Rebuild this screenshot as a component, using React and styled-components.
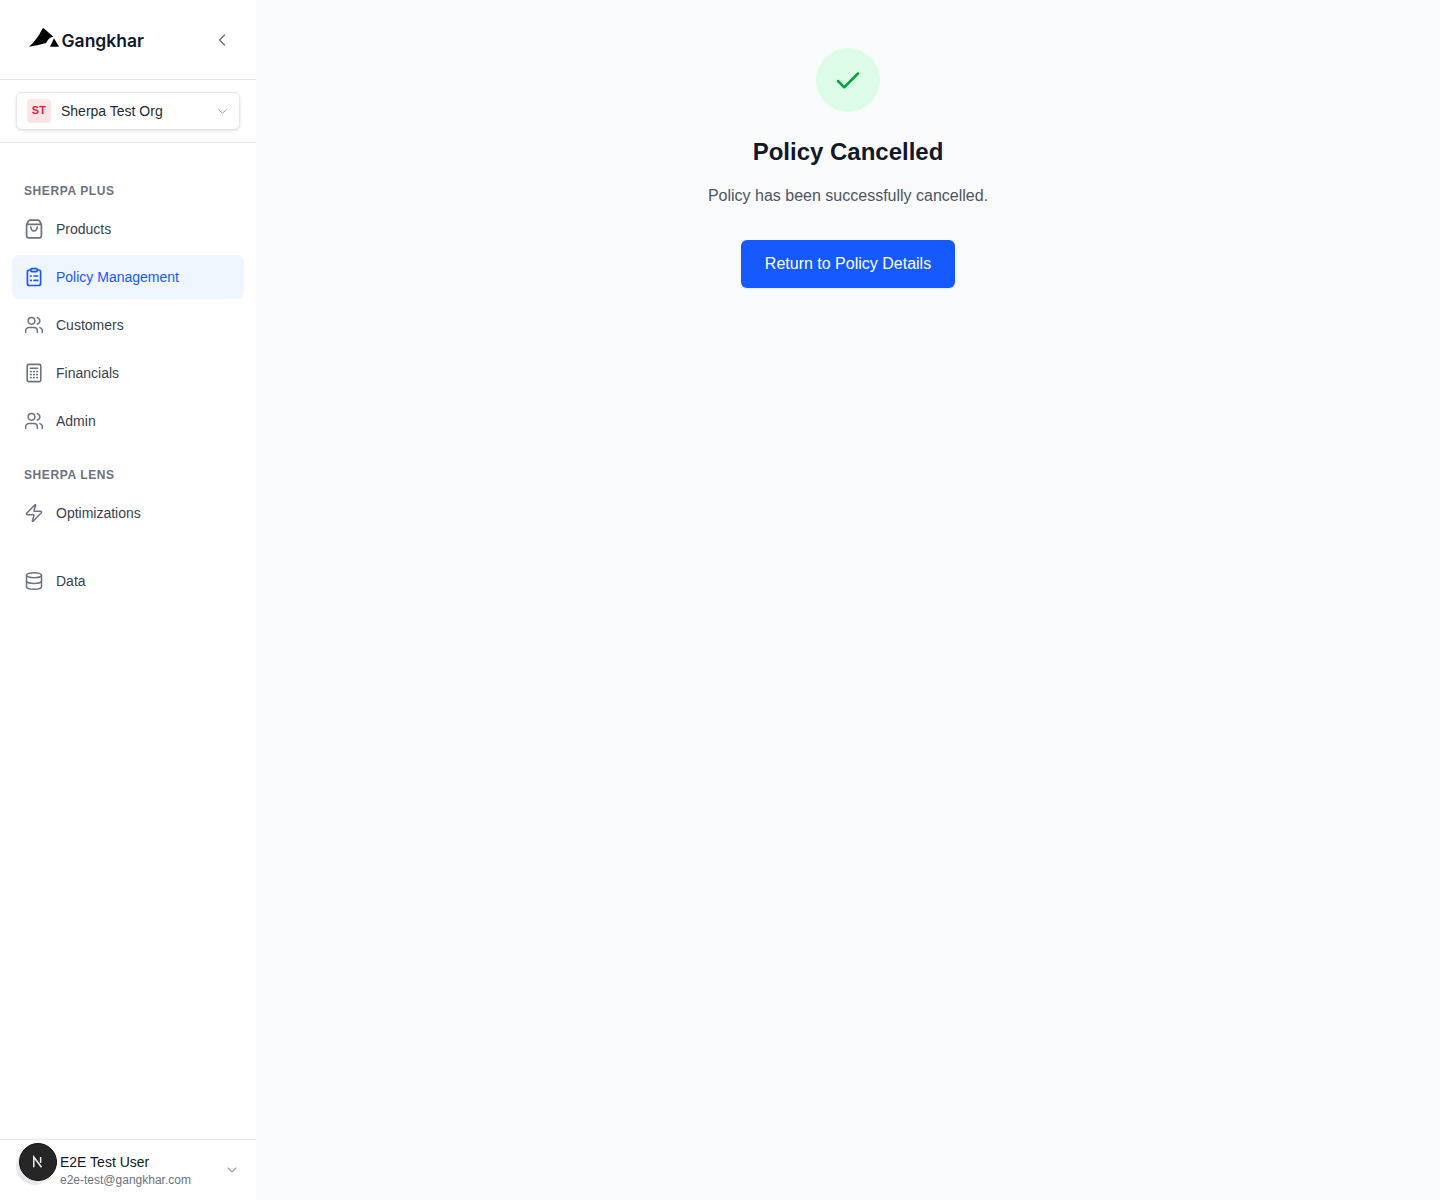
import styled, { createGlobalStyle } from "styled-components"
import { Check, ChevronDown, ChevronLeft, Database, Users, Zap } from "lucide-react"

const GlobalStyle = createGlobalStyle`
    html, body {
        margin: 0;
        padding: 0;
        background: #f9fafb;
        font-family: "Liberation Sans", Arial, sans-serif;
    }
    * {
        box-sizing: border-box;
    }
`

const BagIcon = () => (
    <svg width="20" height="20" viewBox="0 0 20 20" fill="none" stroke="currentColor" strokeWidth="1.7" strokeLinecap="round" strokeLinejoin="round">
        <path d="M4.2 2.4 Q4.6 1.2 6 1.2 H14 Q15.4 1.2 15.8 2.4 L17 5 Q17.4 5.8 17.4 6.5 V16.4 Q17.4 18.8 15 18.8 H5 Q2.6 18.8 2.6 16.4 V6.5 Q2.6 5.8 3 5 Z" />
        <path d="M3 5.4 H17" />
        <path d="M6.8 8 Q7.2 12 10 12 Q12.8 12 13.2 8" />
    </svg>
)

const ClipboardIcon = () => (
    <svg width="20" height="20" viewBox="0 0 20 20" fill="none" stroke="currentColor" strokeWidth="1.7" strokeLinecap="round" strokeLinejoin="round">
        <rect x="3.4" y="3" width="13.2" height="15.5" rx="2" />
        <rect x="6.8" y="1.6" width="6.4" height="3" rx="1" fill="#eff6ff" />
        <path d="M6.6 9 H7.2 M10 9 H13.600 M6.6 13.4 H7.2 M10 13.4 H13.600" />
    </svg>
)

const CalculatorIcon = () => (
    <svg width="20" height="20" viewBox="0 0 20 20" fill="none" stroke="currentColor" strokeWidth="1.6" strokeLinecap="round" strokeLinejoin="round">
        <rect x="3.2" y="1.4" width="13.6" height="17.2" rx="1.6" />
        <path d="M6.4 5.2 H13.6" />
        <path d="M6.6 8.6 H7.2 M9.7 8.6 H10.3 M12.8 8.6 H13.4 M6.6 11.6 H7.2 M9.7 11.6 H10.3 M12.8 11.6 H13.4 M6.6 14.6 H7.2 M9.7 14.6 H10.3 M12.8 14.6 H13.4" />
    </svg>
)

const Logo = () => (
    <svg width="30" height="19" viewBox="0 0 30 19" fill="#000">
        <path d="M0 18.700 Q8 12 13.500 0.600 Q14.300 0 15 0.600 L24.300 8.700 Q20 9 17 15 Q9 17.500 0 18.700 Z" />
        <path d="M21 18.700 L25 10.300 L30 18.700 Z" />
    </svg>
)

const NextMark = () => (
    <svg width="16" height="16" viewBox="0 0 16 16" fill="none" stroke="#eee" strokeWidth="1.5">
        <path d="M3.800 13.300 V3 L11.500 13.200" />
        <path d="M10.600 3 V9" />
    </svg>
)

const sections = [
    {
        title: "SHERPA PLUS",
        items: [
            { label: "Products", icon: <BagIcon /> },
            { label: "Policy Management", icon: <ClipboardIcon />, active: true },
            { label: "Customers", icon: <Users size={20} strokeWidth={1.8} /> },
            { label: "Financials", icon: <CalculatorIcon /> },
            { label: "Admin", icon: <Users size={20} strokeWidth={1.8} /> },
        ],
    },
    {
        title: "SHERPA LENS",
        items: [{ label: "Optimizations", icon: <Zap size={20} strokeWidth={1.8} /> }],
    },
]

const NavItem = ({ item }) => (
    <NavRow $active={item.active}>
        <NavIcon $active={item.active}>{item.icon}</NavIcon>
        {item.label}
    </NavRow>
)

const App = () => {
    return <Layout>
        <GlobalStyle />
        <Sidebar>
            <Brand>
                <BrandMark>
                    <Logo />
                    <BrandName>Gangkhar</BrandName>
                </BrandMark>
                <Collapse><ChevronLeft size={20} strokeWidth={1.7} /></Collapse>
            </Brand>
            <OrgBar>
                <OrgSelect>
                    <OrgBadge>ST</OrgBadge>
                    <OrgName>Sherpa Test Org</OrgName>
                    <OrgChevron><ChevronDown size={15} strokeWidth={1.6} /></OrgChevron>
                </OrgSelect>
            </OrgBar>
            <Nav>
                {sections.map((section) => (
                    <Section key={section.title}>
                        <SectionTitle>{section.title}</SectionTitle>
                        {section.items.map((item) => <NavItem key={item.label} item={item} />)}
                    </Section>
                ))}
                <DataSection>
                    <NavItem item={{ label: "Data", icon: <Database size={20} strokeWidth={1.8} /> }} />
                </DataSection>
            </Nav>
            <UserBar>
                <Avatar>
                    <AvatarShade />
                    <AvatarCircle><NextMark /></AvatarCircle>
                </Avatar>
                <UserText>
                    <UserName>E2E Test User</UserName>
                    <UserMail>e2e-test@gangkhar.com</UserMail>
                </UserText>
                <UserChevron><ChevronDown size={16} strokeWidth={1.6} /></UserChevron>
            </UserBar>
        </Sidebar>
        <Main>
            <SuccessCircle><Check size={30} strokeWidth={2} /></SuccessCircle>
            <Title>Policy Cancelled</Title>
            <Message>Policy has been successfully cancelled.</Message>
            <ReturnButton>Return to Policy Details</ReturnButton>
        </Main>
    </Layout>
}
export default App;

const Layout = styled.div`
    display: flex;
    height: 1200px;
    overflow: hidden;
`
const Sidebar = styled.aside`
    display: flex;
    flex-direction: column;
    flex: 0 0 256px;
    background: #fff;
    box-shadow: 1px 0 3px rgba(0, 0, 0, 0.08);
`
const Brand = styled.div`
    display: flex;
    align-items: center;
    justify-content: space-between;
    height: 80px;
    padding: 0 24px 0 29px;
    border-bottom: 1px solid #e5e7eb;
`
const BrandMark = styled.div`
    display: flex;
    align-items: center;
    gap: 2.500px;
    margin-top: -4px;
`
const BrandName = styled.span`
    font-family: Inter, "Liberation Sans", sans-serif;
    font-size: 17.500px;
    font-weight: 600;
    color: #111827;
    margin-top: 6px;
`
const Collapse = styled.span`
    display: flex;
    color: #6b7280;
`
const OrgBar = styled.div`
    padding: 12px 16px;
    border-bottom: 1px solid #e5e7eb;
`
const OrgSelect = styled.div`
    display: flex;
    align-items: center;
    height: 38px;
    padding: 0 9px 0 10px;
    background: #fff;
    border: 1px solid #e5e7eb;
    border-radius: 6px;
    box-shadow: 0 1px 3px rgba(0, 0, 0, 0.12);
`
const OrgBadge = styled.span`
    display: flex;
    align-items: center;
    justify-content: center;
    width: 24px;
    height: 24px;
    padding-bottom: 2px;
    background: #ffe4e6;
    border-radius: 4px;
    color: #e11d48;
    font-size: 11px;
    font-weight: 700;
    letter-spacing: 0.3px;
`
const OrgName = styled.span`
    flex: 1;
    margin-left: 10px;
    font-size: 14px;
    color: #1f2937;
`
const OrgChevron = styled.span`
    display: flex;
    color: #9ca3af;
`
const Nav = styled.nav`
    display: flex;
    flex-direction: column;
    gap: 16px;
    flex: 1;
    padding: 32px 12px 0;
`
const Section = styled.section`
    display: flex;
    flex-direction: column;
    gap: 4px;
`
const DataSection = styled(Section)`
    margin-top: 8px;
`
const SectionTitle = styled.h3`
    margin: 0;
    padding: 8px 12px 4px;
    font-size: 12px;
    line-height: 16px;
    font-weight: 700;
    letter-spacing: 0.6px;
    color: #6b7280;
`
const NavRow = styled.a`
    display: flex;
    align-items: center;
    gap: 12px;
    height: 44px;
    padding: 0 12px;
    border-radius: 8px;
    font-size: 14px;
    color: ${(props) => (props.$active ? "#1559ff" : "#374151")};
    background: ${(props) => (props.$active ? "#eff6ff" : "transparent")};
`
const NavIcon = styled.span`
    display: flex;
    width: 20px;
    color: ${(props) => (props.$active ? "#1559ff" : "#6b7280")};
    svg {
        flex: none;
    }
`
const UserBar = styled.div`
    display: flex;
    align-items: center;
    height: 61px;
    padding: 0 16px;
    border-top: 1px solid #e5e7eb;
`
const Avatar = styled.div`
    position: relative;
    width: 44px;
    height: 60px;
    flex: none;
`
const AvatarShade = styled.span`
    position: absolute;
    left: 0;
    top: 7px;
    width: 38px;
    height: 38px;
    border-radius: 50%;
    background: linear-gradient(45deg, #dcdee2, #ffffff 80%);
`
const AvatarCircle = styled.span`
    position: absolute;
    left: 3px;
    top: 3px;
    display: flex;
    align-items: center;
    justify-content: center;
    width: 38px;
    height: 38px;
    border-radius: 50%;
    background: #262626;
    border: 1px solid #111;
`
const UserText = styled.div`
    display: flex;
    flex-direction: column;
    flex: 1;
`
const UserName = styled.span`
    font-size: 14px;
    line-height: 20px;
    color: #111827;
`
const UserMail = styled.span`
    font-size: 12px;
    line-height: 16px;
    color: #6b7280;
`
const UserChevron = styled.span`
    display: flex;
    color: #9ca3af;
`
const Main = styled.main`
    display: flex;
    flex-direction: column;
    align-items: center;
    flex: 1;
    padding-top: 48px;
    background: #f9fafb;
`
const SuccessCircle = styled.div`
    display: flex;
    align-items: center;
    justify-content: center;
    width: 64px;
    height: 64px;
    padding-top: 1px;
    border-radius: 50%;
    background: #dcfce7;
    color: #00a63e;
`
const Title = styled.h1`
    margin: 24px 0 0;
    font-size: 24px;
    line-height: 32px;
    font-weight: 700;
    color: #111827;
`
const Message = styled.p`
    margin: 16px 0 0;
    font-size: 16px;
    line-height: 24px;
    color: #4b5563;
`
const ReturnButton = styled.button`
    margin-top: 32px;
    height: 48px;
    padding: 0 24px;
    border: none;
    border-radius: 6px;
    background: #1559ff;
    color: #fff;
    font-family: inherit;
    font-size: 16px;
    box-shadow: 0 1px 2px rgba(0, 0, 0, 0.08);
`
